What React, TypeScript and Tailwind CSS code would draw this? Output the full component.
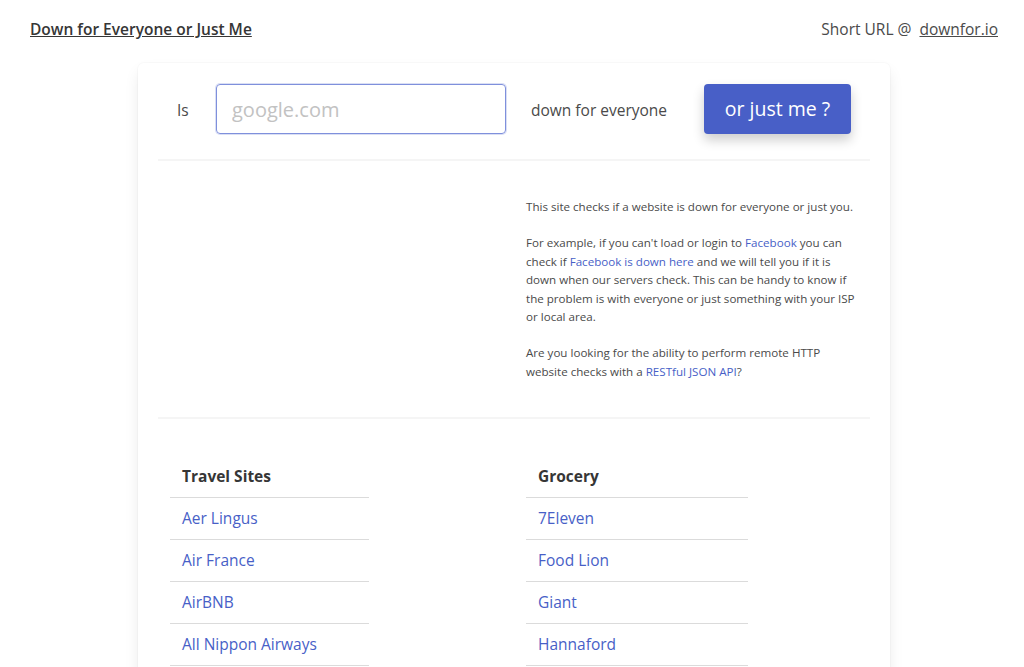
import React from "react"

const travel = ["Aer Lingus", "Air France", "AirBNB", "All Nippon Airways", "American Airlines"]
const grocery = ["7Eleven", "Food Lion", "Giant", "Hannaford", "Harris Teeter"]

function SiteTable({ title, items, width }: { title: string; items: string[]; width: string }) {
  return (
    <table className={`${width} border-collapse`}>
      <thead>
        <tr className="h-[41px] border-b border-[#dbdbdb]">
          <th className="px-3 text-left text-[15.5px] font-bold text-[#363636]">{title}</th>
        </tr>
      </thead>
      <tbody>
        {items.map((item) => (
          <tr key={item} className="h-[42px] border-b border-[#dbdbdb]">
            <td className="px-3 text-[15.5px]">
              <a href="#" className="text-[#485fc7]">
                {item}
              </a>
            </td>
          </tr>
        ))}
      </tbody>
    </table>
  )
}

export default function App() {
  return (
    <div className="min-h-screen bg-white font-['Open_Sans',sans-serif] text-[#4a4a4a]">
      <header className="flex h-[60px] items-center justify-between pl-[30px] pr-[26px]">
        <a href="#" className="text-[15.5px] font-semibold text-[#363636] underline">
          Down for Everyone or Just Me
        </a>
        <div className="text-[15.5px]">
          Short URL @{" "}
          <a href="#" className="ml-1 text-[#4a4a4a] underline">
            downfor.io
          </a>
        </div>
      </header>

      <main className="ml-[138px] mt-[3px] w-[752px] rounded-md bg-white px-5 pt-5 shadow-[0_8px_16px_-2px_rgba(10,10,10,0.1),0_0_0_1px_rgba(10,10,10,0.02)]">
        <div className="flex items-center pt-[1px]">
          <span className="ml-[19px] mt-[3px] w-[39px] text-[15.5px]">Is</span>
          <input
            type="text"
            placeholder="google.com"
            className="h-[50px] w-[290px] rounded-[4px] border border-[#7f90dc] px-[15px] text-[20px] text-[#363636] shadow-[0_0_0_1px_rgba(72,95,199,0.2)] outline-none placeholder:text-[#c2c2c2]"
          />
          <span className="ml-[25px] mt-[3px] w-[173px] text-[15.5px]">down for everyone</span>
          <button className="h-[50px] w-[147px] rounded-[4px] bg-[#485fc7] text-[19.5px] text-white shadow-[0_6px_12px_rgba(10,10,10,0.2)]">
            or just me ?
          </button>
        </div>

        <hr className="mt-[25px] h-[2px] border-0 bg-[#f5f5f5]" />

        <div className="grid grid-cols-2 pt-[37px] pb-[36px]">
          <div />
          <div className="px-3 text-[11.6px] leading-[18.4px]">
            <p>This site checks if a website is down for everyone or just you.</p>
            <p className="mt-[18px]">
              For example, if you can't load or login to{" "}
              <a href="#" className="text-[#485fc7]">
                Facebook
              </a>{" "}
              you can check if{" "}
              <a href="#" className="text-[#485fc7]">
                Facebook is down here
              </a>{" "}
              and we will tell you if it is down when our servers check. This can be handy to know if the problem is
              with everyone or just something with your ISP or local area.
            </p>
            <p className="mt-[18px]">
              Are you looking for the ability to perform remote HTTP website checks with a{" "}
              <a href="#" className="text-[#485fc7]">
                RESTful JSON API
              </a>
              ?
            </p>
          </div>
        </div>

        <hr className="h-[2px] border-0 bg-[#f5f5f5]" />

        <div className="grid grid-cols-2 pt-[37px] pb-8">
          <div className="px-3">
            <SiteTable title="Travel Sites" items={travel} width="w-[199px]" />
          </div>
          <div className="px-3">
            <SiteTable title="Grocery" items={grocery} width="w-[222px]" />
          </div>
        </div>
      </main>
    </div>
  )
}
